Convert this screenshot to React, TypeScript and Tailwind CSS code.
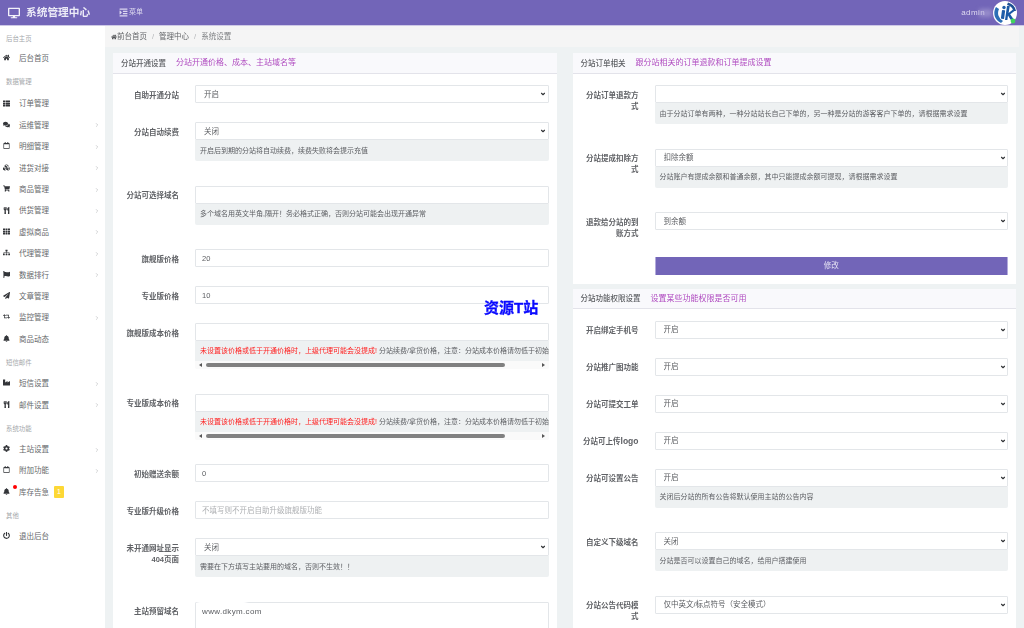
import React from "react";
import {
  FaHome, FaThList, FaComments, FaRegCalendar, FaCubes, FaShoppingCart, FaUtensils, FaTh, FaSitemap,
  FaFlag, FaPaperPlane, FaRetweet, FaBell, FaIndustry, FaCog, FaPowerOff, FaDesktop, FaIndent,
} from "react-icons/fa";
import { ChevronRight, ChevronDown } from "lucide-react";

type NavItem = { label: string; icon: React.ComponentType<{ className?: string }>; arrow?: boolean; alert?: boolean };
type NavSection = { title: string; head: string; items: NavItem[] };

const nav: NavSection[] = [
  { title: "后台主页", head: "h-[22px]", items: [{ label: "后台首页", icon: FaHome }] },
  {
    title: "数据管理",
    head: "h-[24px]",
    items: [
      { label: "订单管理", icon: FaThList },
      { label: "运维管理", icon: FaComments, arrow: true },
      { label: "明细管理", icon: FaRegCalendar, arrow: true },
      { label: "进货对接", icon: FaCubes, arrow: true },
      { label: "商品管理", icon: FaShoppingCart, arrow: true },
      { label: "供货管理", icon: FaUtensils, arrow: true },
      { label: "虚拟商品", icon: FaTh, arrow: true },
      { label: "代理管理", icon: FaSitemap, arrow: true },
      { label: "数据排行", icon: FaFlag, arrow: true },
      { label: "文章管理", icon: FaPaperPlane },
      { label: "监控管理", icon: FaRetweet, arrow: true },
      { label: "商品动态", icon: FaBell },
    ],
  },
  {
    title: "短信邮件",
    head: "h-[23px]",
    items: [
      { label: "短信设置", icon: FaIndustry, arrow: true },
      { label: "邮件设置", icon: FaUtensils, arrow: true },
    ],
  },
  {
    title: "系统功能",
    head: "h-[23px]",
    items: [
      { label: "主站设置", icon: FaCog, arrow: true },
      { label: "附加功能", icon: FaRegCalendar, arrow: true },
      { label: "库存告急", icon: FaBell, alert: true },
    ],
  },
  { title: "其他", head: "h-[23px]", items: [{ label: "退出后台", icon: FaPowerOff }] },
];

function Sidebar() {
  return (
    <aside className="w-[105px] shrink-0 bg-white">
      {nav.map((s) => (
        <div key={s.title}>
          <div className={s.head + " pl-[6px] pt-[8px] text-[6.4px] leading-[9px] text-[#a5a8ab]"}>{s.title}</div>
          {s.items.map((it) => {
            const Icon = it.icon;
            return (
              <div key={it.label} className="relative flex h-[21.4px] items-center text-[7.5px] text-[#66686b]">
                <Icon className="ml-[2.5px] mt-[-2px] h-[7px] w-[7px] shrink-0 text-[#333539]" />
                <span className="ml-[9.5px]">{it.label}</span>
                {it.alert && (
                  <>
                    <span className="absolute left-[13px] top-[3px] h-[4px] w-[4px] rounded-full bg-[#ff0000]" />
                    <span className="ml-[5px] flex h-[12px] w-[10px] items-center justify-center rounded-[1px] bg-[#fdd835] text-[7px] text-white">1</span>
                  </>
                )}
                {it.arrow && <ChevronRight className="absolute left-[94px] h-[6px] w-[6px] text-[#a9abae]" />}
              </div>
            );
          })}
        </div>
      ))}
    </aside>
  );
}

function TopBar() {
  return (
    <header className="relative flex h-[26px] items-center border-b border-[#cdc8e6] bg-[#7265b8] text-white">
      <FaDesktop className="ml-[8px] h-[12px] w-[12px] shrink-0 text-[#f3f2fa]" />
      <span className="ml-[6px] w-[93px] text-[10.7px] font-bold text-[#ecebf7]">系统管理中心</span>
      <FaIndent className="h-[9px] w-[9px] text-[#dcd8ef]" />
      <span className="ml-[1px] text-[7px] text-[#dcd8ef]">菜单</span>
      <span className="ml-auto mr-[8px] text-[8px] tracking-[0.4px] text-[#dedaf0]">admin</span>
      <span className="absolute left-[979px] top-[9px] h-[8px] w-[13px] bg-[#b9b2dd] opacity-50 blur-[2px]" />
      <svg viewBox="0 0 24 24" className="mr-[7px] h-[24px] w-[24px] shrink-0">
        <circle cx="12" cy="12" r="12" fill="#fff" />
        <path d="M3 6 A11 11 0 0 0 8 22 L10 20 A9 9 0 0 1 6 8 Z" fill="#2a6fb5" />
        <path d="M15 1.5 A11 11 0 0 1 23 10 L20.5 10 A9 9 0 0 0 14 4 Z" fill="#1d4f93" />
        <rect x="8.5" y="9" width="3.2" height="9" rx="0.8" fill="#1f5da8" transform="rotate(8 10 13)" />
        <circle cx="11" cy="6.5" r="1.7" fill="#1f5da8" />
        <path d="M14 5 L16.8 5 L15.6 12 L20 8.5 L21.5 10 L17.2 13.2 L20.4 18 L17.6 18.8 L15 14.5 L14.4 19 L12 19 Z" fill="#1b5aa6" />
        <circle cx="20" cy="20" r="2.4" fill="#3fd45d" />
      </svg>
    </header>
  );
}

function Breadcrumb() {
  return (
    <div className="mr-[5px] flex h-[21px] items-center bg-[#f5f5f5] pl-[6px] pt-[1px] text-[7.5px] text-[#636568]">
      <FaHome className="h-[6px] w-[6px] text-[#55575a]" />
      <span>前台首页</span>
      <span className="mx-[5px] text-[#b5b7ba]">/</span>
      <span>管理中心</span>
      <span className="mx-[5px] text-[#b5b7ba]">/</span>
      <span className="text-[#7e8083]">系统设置</span>
    </div>
  );
}

function Card({ title, sub, children }: { title: string; sub: string; children: React.ReactNode }) {
  return (
    <section className="mb-[5px] bg-white">
      <div className="flex h-[20.5px] items-center border-b border-[#e3e3ea] bg-[#f9f9fc] pl-[8px] pt-[1px]">
        <span className="text-[7.5px] font-medium text-[#5c5e62]">{title}</span>
        <span className="ml-[10px] text-[8px] text-[#b04cc0]">{sub}</span>
      </div>
      <div className="px-[8px] pb-[9px] pt-[11.5px]">{children}</div>
    </section>
  );
}

function Row({ label, help, children }: { label: React.ReactNode; help?: React.ReactNode; children: React.ReactNode }) {
  return (
    <div className={help ? "mb-[24.5px] flex items-start" : "mb-[19px] flex items-start"}>
      <label className="mb-[-1px] mr-[16px] w-[58px] shrink-0 pt-[4.5px] text-right text-[7.5px] font-semibold leading-[11px] text-[#606266]">
        {label}
      </label>
      <div className="min-w-0 flex-1">
        {children}
        {help}
      </div>
    </div>
  );
}

const fieldClass =
  "block h-[18px] w-full rounded-[1px] border border-[#e3e6e9] bg-white pt-[1px] text-[7.5px] text-[#5a5c60] outline-none";

function Select({ value }: { value: string }) {
  return (
    <div className="relative">
      <select defaultValue={value} className={fieldClass + " appearance-none pl-[8px] pr-[12px]"}>
        <option value={value}>{value}</option>
      </select>
      <ChevronDown strokeWidth={4.5} className="pointer-events-none absolute right-[2.5px] top-[6px] h-[6px] w-[6px] text-[#303236]" />
    </div>
  );
}

function Input({ value, placeholder }: { value?: string; placeholder?: string }) {
  return (
    <input
      readOnly
      defaultValue={value}
      placeholder={placeholder}
      className={fieldClass + " px-[6px] placeholder:text-[#aeb0b3]"}
    />
  );
}

function Help({ children }: { children: React.ReactNode }) {
  return (
    <div className="flex h-[21px] items-center rounded-b-[2px] bg-[#eef1f2] pl-[5px] pt-[1px] text-[7px] text-[#5c5e62]">
      {children}
    </div>
  );
}

function ScrollHelp() {
  return (
    <div className="h-[28px] overflow-hidden rounded-b-[2px]">
      <div className="flex h-[20px] items-center overflow-hidden whitespace-nowrap bg-[#eef1f2] pl-[5px] pt-[1px] text-[7px] text-[#5c5e62]">
        <span className="text-[#ff2020]">未设置该价格或低于开通价格时，上级代理可能会没提成!</span>
        <span className="ml-[2px]">分站续费/拿货价格，注意：分站成本价格请勿低于初始版本价格</span>
      </div>
      <div className="flex h-[8px] items-center bg-[#fafafa] px-[4px]">
        <span className="h-0 w-0 border-y-[2px] border-r-[3px] border-y-transparent border-r-[#555]" />
        <span className="ml-[4px] h-[4px] w-[299px] rounded-full bg-[#808080]" />
        <span className="ml-auto h-0 w-0 border-y-[2px] border-l-[3px] border-y-transparent border-l-[#555]" />
      </div>
    </div>
  );
}

function LeftColumn() {
  return (
    <Card title="分站开通设置" sub="分站开通价格、成本、主站域名等">
      <Row label="自助开通分站"><Select value="开启" /></Row>
      <Row label="分站自动续费" help={<Help>开启后到期的分站将自动续费，续费失败将会提示充值</Help>}><Select value="关闭" /></Row>
      <Row label="分站可选择域名" help={<Help>多个域名用英文半角,隔开！务必格式正确，否则分站可能会出现开通异常</Help>}><Input /></Row>
      <Row label="旗舰版价格"><Input value="20" /></Row>
      <Row label="专业版价格"><Input value="10" /></Row>
      <Row label="旗舰版成本价格" help={<ScrollHelp />}><Input /></Row>
      <Row label="专业版成本价格" help={<ScrollHelp />}><Input /></Row>
      <Row label="初始赠送余额"><Input value="0" /></Row>
      <Row label="专业版升级价格"><Input placeholder="不填写则不开启自助升级旗舰版功能" /></Row>
      <Row label="未开通网址显示404页面" help={<Help>需要在下方填写主站要用的域名，否则不生效！！</Help>}><Select value="关闭" /></Row>
      <Row label="主站预留域名">
        <div className="relative">
          <textarea
            readOnly
            defaultValue="www.dkym.com"
            className="block h-[60px] w-full resize-none rounded-[1px] border border-[#e3e6e9] bg-white px-[6px] pt-[3px] text-[8px] tracking-[0.35px] text-[#5a5c60] outline-none"
          />
          <span className="absolute left-[2px] top-[-6px] h-[10px] w-[50px] rounded-full bg-white blur-[1.5px]" />
        </div>
      </Row>
    </Card>
  );
}

function RightColumn() {
  return (
    <>
      <Card title="分站订单相关" sub="跟分站相关的订单退款和订单提成设置">
        <Row label="分站订单退款方式" help={<Help>由于分站订单有两种，一种分站站长自己下单的，另一种是分站的游客客户下单的，请根据需求设置</Help>}><Select value="" /></Row>
        <Row label="分站提成扣除方式" help={<Help>分站账户有提成余额和普通余额，其中只能提成余额可提现，请根据需求设置</Help>}><Select value="扣除余额" /></Row>
        <Row label="退款给分站的到账方式"><Select value="到余额" /></Row>
        <div className="ml-[74px] flex h-[18px] items-center justify-center border-x border-[#b3abdc] bg-[#7265b8] pt-[1px] text-[7.5px] text-[#e6e3f4]">修改</div>
      </Card>
      <Card title="分站功能权限设置" sub="设置某些功能权限是否可用">
        <Row label="开启绑定手机号"><Select value="开启" /></Row>
        <Row label="分站推广图功能"><Select value="开启" /></Row>
        <Row label="分站可提交工单"><Select value="开启" /></Row>
        <Row label={<>分站可上传<span className="text-[8.5px]">logo</span></>}><Select value="开启" /></Row>
        <Row label="分站可设置公告" help={<Help>关闭后分站的所有公告将默认使用主站的公告内容</Help>}><Select value="开启" /></Row>
        <Row label="自定义下级域名" help={<Help>分站是否可以设置自己的域名，给用户搭建使用</Help>}><Select value="关闭" /></Row>
        <Row label="分站公告代码模式"><Select value="仅中英文/标点符号（安全模式）" /></Row>
      </Card>
    </>
  );
}

export default function App() {
  return (
    <div
      className="relative h-[628px] overflow-hidden bg-[#eef2f3]"
      style={{ fontFamily: '"Liberation Sans", "Noto Sans CJK SC", sans-serif' }}
    >
      <div className="flex h-full flex-col blur-[0.3px]">
        <TopBar />
        <div className="flex min-h-0 flex-1">
          <Sidebar />
          <main className="min-w-0 flex-1">
            <Breadcrumb />
            <div className="grid grid-cols-2 gap-x-[16px] px-[8px] pt-[6px]">
              <div>
                <LeftColumn />
              </div>
              <div>
                <RightColumn />
              </div>
            </div>
          </main>
        </div>
      </div>
      <span className="absolute left-[484px] top-[299px] text-[15px] font-bold leading-[18px] text-[#0a0aff] [-webkit-text-stroke:0.3px_#0a0aff]">资源T站</span>
    </div>
  );
}
